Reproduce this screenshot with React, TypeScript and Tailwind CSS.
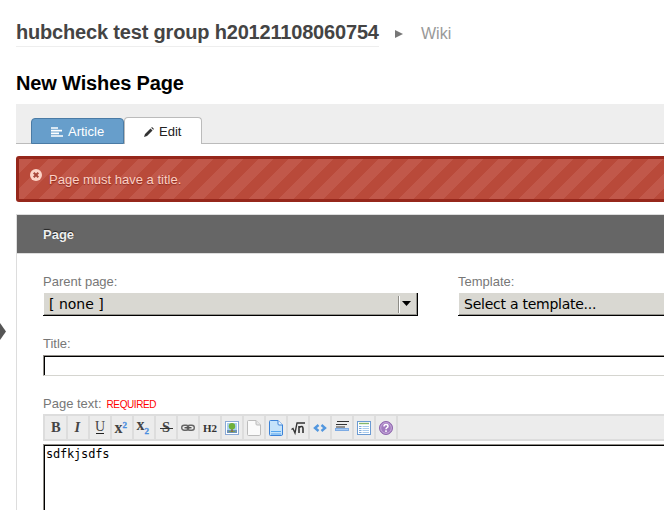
import React from "react";

const Glyph = ({ children }: { children: React.ReactNode }) => (
  <svg width="16" height="16" viewBox="0 0 16 16" className="block overflow-visible">{children}</svg>
);

const serif = { fontFamily: '"Liberation Serif", serif', fill: "#444" };

const tools: { name: string; icon: React.ReactNode }[] = [
  { name: "Bold", icon: <text x="3" y="12" fontSize="14.5" fontWeight="bold" {...serif}>B</text> },
  { name: "Italic", icon: <text x="4.5" y="12" fontSize="14.5" fontWeight="bold" fontStyle="italic" {...serif}>I</text> },
  {
    name: "Underline",
    icon: (
      <>
        <text x="3" y="11" fontSize="14" {...serif}>U</text>
        <path d="M4 13.5h8" stroke="#222" />
      </>
    ),
  },
  {
    name: "Superscript",
    icon: (
      <>
        <text x="0.5" y="13" fontSize="16" fontWeight="bold" {...serif}>x</text>
        <text x="8.5" y="7.5" fontSize="9" fontWeight="bold" {...serif} fill="#4a8ee0" stroke="#4a8ee0" strokeWidth="0.3">2</text>
      </>
    ),
  },
  {
    name: "Subscript",
    icon: (
      <>
        <text x="0.5" y="10" fontSize="16" fontWeight="bold" {...serif}>x</text>
        <text x="8.5" y="13.5" fontSize="9" fontWeight="bold" {...serif} fill="#4a8ee0" stroke="#4a8ee0" strokeWidth="0.3">2</text>
      </>
    ),
  },
  {
    name: "Strike",
    icon: (
      <>
        <text x="4" y="12" fontSize="14.5" fontWeight="bold" {...serif}>S</text>
        <path d="M2 8.5h13" stroke="#333" />
      </>
    ),
  },
  {
    name: "Link",
    icon: (
      <g fill="none" stroke="#666" strokeWidth="1.4">
        <rect x="1.7" y="5.2" width="7" height="5" rx="2.5" />
        <rect x="7.3" y="5.2" width="7" height="5" rx="2.5" />
        <path d="M4.5 7.7h7" stroke="#555" />
      </g>
    ),
  },
  { name: "Heading", icon: <text x="1" y="11.5" fontSize="11" fontWeight="bold" textLength="14" {...serif} fill="#333">H2</text> },
  {
    name: "Image",
    icon: (
      <>
        <rect x="1.5" y="1.5" width="13" height="13" fill="#fff" stroke="#8aa9d6" />
        <rect x="3" y="3" width="10" height="8" fill="#a9d0f0" />
        <rect x="3" y="10" width="10" height="3" fill="#6f93b8" />
        <path d="M5 11h6v1H5z" fill="#79a451" />
        <path d="M7.3 8h1.4v4H7.3z" fill="#98602e" />
        <circle cx="8" cy="6.3" r="3.2" fill="#6fb03a" />
      </>
    ),
  },
  {
    name: "File",
    icon: (
      <>
        <path d="M1.5 1.5q0-1 1-1H10l4.500 4.500V14q0 1.500-1 1.500h-11q-1 0-1-1z" fill="#fafafa" stroke="#bbb" />
        <path d="M10 .5v3.500q0 1 1 1h3.500" fill="#e5e5e5" stroke="#bbb" />
      </>
    ),
  },
  {
    name: "Template",
    icon: (
      <>
        <path d="M1.500 1.500q0-1 1-1H10l4.500 4.500V14q0 1.500-1 1.500h-11q-1 0-1-1z" fill="#c5e3fa" stroke="#3b82d8" />
        <path d="M10 .5v3.500q0 1 1 1h3.500" fill="#f0f8ff" stroke="#3b82d8" />
        <path d="M3 11.500h10M3 14h10" stroke="#54a5ef" />
      </>
    ),
  },
  {
    name: "Equation",
    icon: (
      <>
        <path d="M1.500 9.500l1.500-1 2 4.500 2-10h8" fill="none" stroke="#333" strokeWidth="1.300" />
        <path d="M9 13V6M9 7.500q4-2.500 4 1V13" fill="none" stroke="#333" strokeWidth="1.600" />
      </>
    ),
  },
  { name: "Code", icon: <path d="M6.500 5l-3.500 3 3.500 3M9.500 5l3.500 3-3.500 3" fill="none" stroke="#5297df" strokeWidth="2.400" /> },
  {
    name: "Rule",
    icon: (
      <>
        <path d="M3 1.500h12M2 4.500h11M2 7h9" stroke="#333" strokeWidth="1.200" />
        <rect x="1.500" y="8.500" width="13" height="2" fill="#a5c9f3" stroke="#7dabe4" />
      </>
    ),
  },
  {
    name: "Table",
    icon: (
      <>
        <rect x="1.500" y="1.500" width="13" height="13" fill="#fff" stroke="#6b9bd3" />
        <path d="M3 3.500h10" stroke="#84b66b" strokeWidth="1.400" />
        <path d="M3 6.500h2.500M3 8.500h2.500M3 10.500h2.500M3 12.500h2.500" stroke="#7da8d9" />
        <path d="M6.500 6.500h6.500M6.500 8.500h6.500M6.500 10.500h6.500M6.500 12.500h6.500" stroke="#a9cbec" />
      </>
    ),
  },
  {
    name: "Help",
    icon: (
      <>
        <circle cx="8" cy="8" r="6.500" fill="#a27bc0" stroke="#8e66ad" />
        <circle cx="8" cy="8" r="5.300" fill="none" stroke="#c5a8d9" />
        <path d="M6 6.500q0-2 2-2t2 1.700q0 1-1 1.500T8 9.300M8 10.300v1.700" fill="none" stroke="#fff" strokeWidth="1.500" />
      </>
    ),
  },
];

const Select = ({ text, tracking }: { text: string; tracking: string }) => (
  <div className="mt-[3px] flex h-[23px] w-[375px] border-r border-b border-black bg-[#d9d8d2] shadow-[inset_1px_0_#fff,inset_-1px_-1px_#96958f]">
    <span className={`pl-[6px] font-['DejaVu_Sans',sans-serif] text-[14px] leading-[23px] text-black ${tracking}`}>{text}</span>
    <span className="mt-[3px] mr-px ml-auto flex h-[17px] w-[18px] justify-center border-l border-[#8d8c86] shadow-[inset_1px_0_#fff]">
      <svg width="9" height="5" viewBox="0 0 9 5" className="mt-[5px] mr-[2px]"><path d="M0 0h9L4.500 5z" fill="#000" /></svg>
    </span>
  </div>
);

export default function App() {
  return (
    <div className="flex h-[510px] w-[664px] overflow-hidden bg-white font-['Liberation_Sans',Arial,sans-serif] whitespace-nowrap">
      <aside className="w-4 shrink-0 pt-[323px]">
        <svg width="6" height="17" viewBox="0 0 6 17"><path d="M0 0l6 8.500L0 17z" fill="#555" /></svg>
      </aside>
      <main className="w-[648px] shrink-0">
        <header className="flex h-[70px] items-start pt-[20px]">
          <h1 className="h-[27px] w-[363px] border-b border-[#eee] text-[20px] leading-[24px] font-bold tracking-[-0.18px] text-[#444]">hubcheck test group h20121108060754</h1>
          <svg width="8" height="8" viewBox="0 0 8 8" className="mt-[10px] ml-[16px]"><path d="M0 0l8 4-8 4z" fill="#777" /></svg>
          <span className="ml-[18px] text-[16px] leading-[28px] text-[#999]">Wiki</span>
        </header>
        <h2 className="h-[34px] text-[20px] leading-[26px] font-bold tracking-[-0.14px] text-black">New Wishes Page</h2>
        <nav className="flex h-[40px] items-end border-b border-[#bbb] bg-[#eee] pl-[15px] text-[13px]">
          <a className="-mb-px flex h-[26px] w-[93px] items-center rounded-t-[4px] border border-[#4a7ba5] bg-[#679ecb] pt-px pl-[19px] text-white">
            <svg width="12" height="10" viewBox="0 0 12 10" className="mr-[5px]"><path d="M0 1h7M0 3.700h11M0 6.300h8M0 9h12" stroke="#fff" strokeWidth="1.700" /></svg>
            Article
          </a>
          <a className="-mb-px flex h-[27px] w-[78px] items-center rounded-t-[4px] border border-b-0 border-[#bbb] bg-white pt-px pl-[19px] text-[#222]">
            <svg width="10" height="10" viewBox="0 0 10 10" className="mr-[5px]"><path d="M0 10l1-3 5.500-5.500 2 2L3 9zM7.200.8L8 0l2 2-.8.8z" fill="#333" /></svg>
            Edit
          </a>
        </nav>
        <div className="mt-[12px] flex h-[46px] w-[660px] rounded-[3px] border-3 border-[#96271b] bg-[#b94a3a] bg-[linear-gradient(135deg,#c1584a_25%,transparent_25%,transparent_50%,#c1584a_50%,#c1584a_75%,transparent_75%)] bg-[length:30px_30px]">
          <svg width="12" height="12" viewBox="0 0 12 12" className="mt-[10px] ml-[11px]"><circle cx="6" cy="6" r="6" fill="#fcd4c7" /><path d="M3.700 3.700l4.600 4.600M8.300 3.700L3.700 8.300" stroke="#a8483b" strokeWidth="2" /></svg>
          <p className="ml-[7px] text-[13px] leading-[42px] text-[#fcd0c4] [text-shadow:0_1px_1px_#8b2c20]">Page must have a title.</p>
        </div>
        <form className="mt-[12px] h-[310px] w-[660px] border border-[#ddd]">
          <h3 className="h-[38px] bg-[#666] pl-[26px] text-[13px] leading-[39px] font-bold text-[#eee] [text-shadow:0_-1px_1px_#222]">Page</h3>
          <div className="border-t border-[#ddd] pl-[26px] text-[13px] text-[#777]">
            <div className="flex gap-[40px] pt-[20px]">
              <label><span className="block leading-[16px]">Parent page:</span><Select text="[ none ]" tracking="tracking-[0px]" /></label>
              <label><span className="block leading-[16px]">Template:</span><Select text="Select a template..." tracking="tracking-[-0.25px]" /></label>
            </div>
            <label className="block pt-[20px]">
              <span className="block leading-[16px]">Title:</span>
              <div className="mt-[3px] h-[21px] border-t border-b border-l border-[#918e88] border-b-[#d5d5d0] shadow-[inset_1px_1px_#000]" />
            </label>
            <div className="flex h-[38px] pt-[20px] leading-[16px]">
              Page text:<span className="ml-[5px] pt-px text-[10px] tracking-[-0.4px] text-[#f00]">REQUIRED</span>
            </div>
            <div className="flex h-[27px] border-2 border-[#ddd] bg-[#ececec] pl-px">
              {tools.map((t) => (
                <button key={t.name} type="button" aria-label={t.name} className="flex h-[23px] w-[22px] items-center justify-center border-r-2 border-[#ddd]">
                  <Glyph>{t.icon}</Glyph>
                </button>
              ))}
            </div>
            <div className="mt-[3px] h-[80px] border-t border-l border-[#918e88] pt-[2px] pl-[2px] font-['DejaVu_Sans_Mono',monospace] text-[12px] leading-[14px] tracking-[-0.2px] text-black shadow-[inset_1px_1px_#000]">sdfkjsdfs</div>
          </div>
        </form>
      </main>
    </div>
  );
}
